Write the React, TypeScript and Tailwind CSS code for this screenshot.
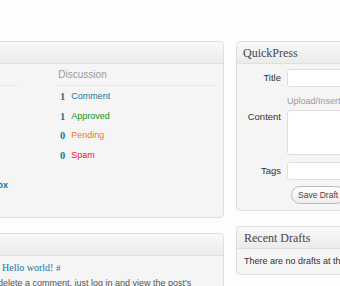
const box = "rounded-[4px] border border-[#dfdfdf] bg-[#f5f5f5]";
const head =
  "h-[22px] rounded-t-[4px] border-b border-[#dfdfdf] bg-linear-to-b from-[#f9f9f9] to-[#ebebeb] flex items-center";
const title = "font-['Liberation_Serif',Georgia,serif] text-[12px] text-[#464646]";
const field = "h-[18px] flex-1 rounded-[3px] border border-[#dfdfdf] bg-white";

const discussion = [
  { n: "1", label: "Comment", color: "text-[#21759b]" },
  { n: "1", label: "Approved", color: "text-[#129312]" },
  { n: "0", label: "Pending", color: "text-[#ee7a10]" },
  { n: "0", label: "Spam", color: "text-[#f0141e]" },
];

const RightNow = () => (
  <div className={`${box} h-[177px]`}>
    <div className={head} />
    <div className="px-[8px]">
      <div className="flex">
        <div className="w-[79px] h-[22px] border-b border-[#e6e6e6]" />
        <div className="ml-[39px] w-[160px]">
          <p className="h-[22px] border-b border-[#e6e6e6] pl-[2px] text-[10px] leading-[21px] text-[#999]">
            Discussion
          </p>
          <div className="mt-[1px]">
            {discussion.map((row) => (
              <div key={row.label} className="flex h-[19.7px] items-center">
                <span className="w-[9px] text-right font-['Liberation_Serif',Georgia,serif] text-[10.5px] font-bold text-[#21759b]">
                  {row.n}
                </span>
                <span className={`ml-[6px] text-[9px] ${row.color}`}>{row.label}</span>
              </div>
            ))}
          </div>
        </div>
      </div>
      <p className="mt-[13px] w-[69px] whitespace-nowrap text-right text-[9px] leading-[12px] text-[#333]">
        Theme <a className="font-bold text-[#21759b]">Sandbox</a>
      </p>
    </div>
  </div>
);

const RecentComments = () => (
  <div className={`${box} mt-[15px]`}>
    <div className={head} />
    <div className="px-[8px] pt-[6px] pb-[20px]">
      <p className="pl-[63px] font-['Liberation_Serif',Georgia,serif] text-[10px] leading-[12px] text-[#21759b]">
        Hello world! <span className="text-[9px]">#</span>
      </p>
      <p className="mt-[3px] pl-[47px] whitespace-nowrap text-[9px] leading-[12px] text-[#555]">
        To delete a comment, just log in and view the post&apos;s
        <br />
        comments. There you will have the option to edit or delete them.
      </p>
    </div>
  </div>
);

const QuickPress = () => (
  <div className={box}>
    <div className={`${head} pl-[6px]`}>
      <h3 className={title}>QuickPress</h3>
    </div>
    <div className="h-[146px] pt-[5px] text-[9.5px] leading-[12px] text-[#333]">
      <div className="flex items-center">
        <label className="w-[44px] text-right">Title</label>
        <div className={`ml-[6px] ${field}`} />
      </div>
      <p className="mt-[8px] ml-[50px] h-[12px] text-[9px] text-[#999]">Upload/Insert</p>
      <div className="mt-[3px] flex items-start">
        <label className="mt-[1px] w-[44px] text-right">Content</label>
        <div className="ml-[6px] h-[45px] flex-1 rounded-[3px] border border-[#dfdfdf] bg-white" />
      </div>
      <div className="mt-[7px] flex items-center">
        <label className="w-[44px] text-right">Tags</label>
        <div className={`ml-[6px] ${field}`} />
      </div>
      <button className="mt-[6px] ml-[54px] flex h-[18px] items-center whitespace-nowrap rounded-full border border-[#bbb] bg-linear-to-b from-white to-[#efefef] px-[6px] text-[8.5px] text-[#464646]">
        Save Draft
      </button>
    </div>
  </div>
);

const RecentDrafts = () => (
  <div className={`${box} mt-[15px]`}>
    <div className={`${head} pl-[7px]`}>
      <h3 className={title}>Recent Drafts</h3>
    </div>
    <div className="flex h-[25px] items-center px-[7px] whitespace-nowrap text-[9px] text-[#333]">
      There are no drafts at the moment
    </div>
  </div>
);

export default function App() {
  return (
    <div className="h-[286px] w-[340px] overflow-hidden bg-[#fdfdfd] pt-[41px] font-['Liberation_Sans',Arial,sans-serif]">
      <div className="-ml-[70px] flex items-start gap-[12px]">
        <div className="w-[294px] shrink-0">
          <RightNow />
          <RecentComments />
        </div>
        <div className="w-[200px] shrink-0">
          <QuickPress />
          <RecentDrafts />
        </div>
      </div>
    </div>
  );
}
